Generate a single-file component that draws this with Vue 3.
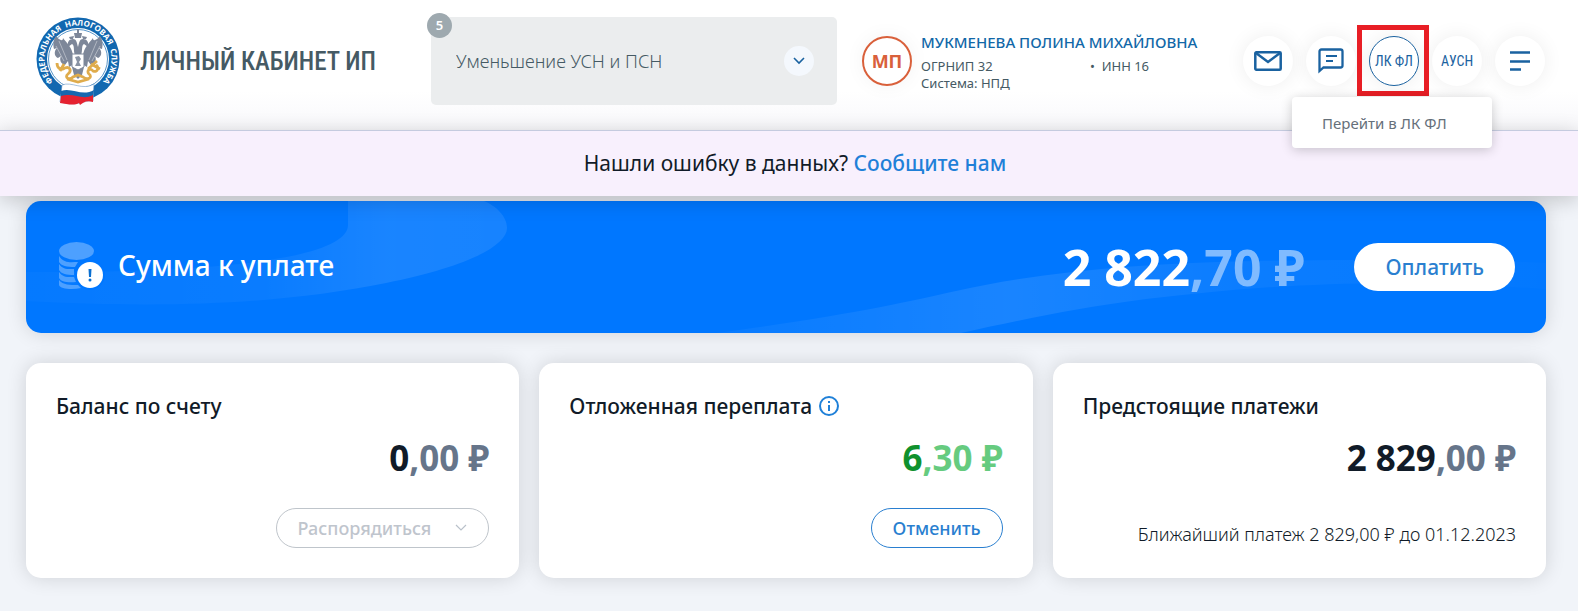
<script setup>
import { ref } from 'vue';

const selectedMode = ref('usn');

const modes = [
  { value: 'usn', label: 'Уменьшение УСН и ПСН' }
];

const cards = [
  {
    id: 'balance',
    title: 'Баланс по счету',
    whole: '0',
    fraction: ',00 ₽',
    button: 'Распорядиться',
    disabled: true
  },
  {
    id: 'deferred',
    title: 'Отложенная переплата',
    whole: '6',
    fraction: ',30 ₽',
    info: true,
    green: true,
    button: 'Отменить'
  },
  {
    id: 'upcoming',
    title: 'Предстоящие платежи',
    whole: '2 829',
    fraction: ',00 ₽',
    note: 'Ближайший платеж 2 829,00 ₽ до 01.12.2023'
  }
];
</script>

<template>
  <div class="page">
    <header class="header">
      <a href="#" class="brand">
        <svg class="logo" viewBox="0 0 84 88" aria-hidden="true">
          <defs>
            <path id="ring" d="M42 75.500 A33.500 33.500 0 0 1 42 8.500 A33.500 33.500 0 0 1 42 75.500" />
          </defs>
          <circle cx="42" cy="42" r="41.500" fill="#1268b0" />
          <circle cx="42" cy="42" r="31" fill="#fff" />
          <circle cx="42" cy="42" r="29.500" fill="none" stroke="#1268b0" stroke-width="0.700" />
          <text class="logo-text">
            <textPath href="#ring" startOffset="50%" text-anchor="middle">ФЕДЕРАЛЬНАЯ&#160; НАЛОГОВАЯ&#160; СЛУЖБА</textPath>
          </text>
          <g fill="#7d8799">
            <path d="M37 38 C36 31 31 26 27 21 C27 25 23 23 20 19 C17 23 17 28 18 32 L21 31 C17 35 19 40 22 41 L25 39 C23 43 25 47 29 48 L32 44 L33 50 L38 47Z" />
            <path d="M47 38 C48 31 53 26 57 21 C57 25 61 23 64 19 C67 23 67 28 66 32 L63 31 C67 35 65 40 62 41 L59 39 C61 43 59 47 55 48 L52 44 L51 50 L46 47Z" />
            <path d="M39 38 C37 33 39 29 36 27 L32 30 C31 25 33 22 37 22 C41 22 41 27 42 30 C43 27 43 22 47 22 C51 22 53 25 52 30 L48 27 C45 29 47 33 45 38Z" />
            <path d="M38 16 H46 L45 21 H39Z M41 12 H43 V16 H41Z M33 20 L38 19 L37 22 H34Z M46 19 L51 20 L50 22 H47Z" />
            <path d="M36 50 H48 L46 58 L42 62 L38 58Z" />
          </g>
          <g stroke="#fff" stroke-width="0.400" fill="none">
            <path d="M23 24 L31 43 M20 29 L28 44 M61 24 L53 43 M64 29 L56 44" />
          </g>
          <g fill="none" stroke="#dfac4c" stroke-width="2.800">
            <path d="M21 46 C21 51 25 54 29 51 C34 49 36 54 32 57 C28 60 33 64 37 60 L42 58 L47 60 C52 64 57 60 53 57 C50 54 54 50 57 54 C62 56 63 50 60 48 M52 52 L61 44 M31 62 L42 65 L53 62 M24 54 L28 47 M55 47 L64 52" />
          </g>
          <path d="M36 37 H48 V50 L42 53 L36 50Z" fill="#fff" stroke="#7d8799" />
          <path d="M39 40 L43 39 L45 42 L43 45 L45 49 H39 L41 45Z" fill="#8993a3" />
          <path d="M26 68 C36 64 46 74 58 67 L57 84 C47 83 43 90 24 85Z" fill="#fff" stroke="#4d83b8" stroke-width="0.500" />
          <path d="M25 74 C36 70 46 80 58 73 L57 80 C46 86 38 76 25 80Z" fill="#1767af" />
          <path d="M25 79 C38 75 46 84 57 78 V85 C50 83 47 86 44 88 L43 86 C38 89 31 87 24 86Z" fill="#e52230" />
        </svg>
        <span class="brand-name">ЛИЧНЫЙ КАБИНЕТ ИП</span>
      </a>

      <div class="mode">
        <span class="mode-count">5</span>
        <select v-model="selectedMode" aria-label="Режим налогообложения">
          <option v-for="mode in modes" :key="mode.value" :value="mode.value">{{ mode.label }}</option>
        </select>
        <span class="mode-arrow">
          <svg width="12" height="8" viewBox="0 0 12 8"><path d="M1 1 L6 6 L11 1" fill="none" stroke="#1a62a0" stroke-width="1.600" /></svg>
        </span>
      </div>

      <div class="profile">
        <span class="avatar">МП</span>
        <div class="profile-data">
          <a href="#" class="profile-name">МУКМЕНЕВА ПОЛИНА МИХАЙЛОВНА</a>
          <div class="profile-ids">
            <span>ОГРНИП 32</span>
            <span>•&nbsp; ИНН 16</span>
          </div>
          <div>Система: НПД</div>
        </div>
      </div>

      <nav class="actions">
        <button type="button" class="round" aria-label="Сообщения">
          <svg width="28" height="20" viewBox="0 0 28 20" fill="none" stroke="#1a62a0" stroke-width="2.500">
            <rect x="1.300" y="1.300" width="25.400" height="17.400" rx="1" />
            <path d="M2 2 L14 11 L26 2" />
          </svg>
        </button>
        <button type="button" class="round" aria-label="Чат">
          <svg width="26" height="26" viewBox="0 0 26 26" fill="none" stroke="#1a62a0" stroke-width="2.300">
            <path d="M1.500 23 V3.500 Q1.500 1.500 3.500 1.500 H22.500 Q24.500 1.500 24.500 3.500 V17.500 Q24.500 19.500 22.500 19.500 H5.500Z" />
            <path d="M8 8 H19 M8 13 H15" stroke-width="2" />
          </svg>
        </button>
        <div class="lk">
          <button type="button" class="round round-outlined">ЛК ФЛ</button>
          <span class="lk-frame"></span>
          <a href="#" class="lk-menu">Перейти в ЛК ФЛ</a>
        </div>
        <button type="button" class="round">АУСН</button>
        <button type="button" class="round" aria-label="Меню">
          <svg width="20" height="20" viewBox="0 0 20 20" fill="none" stroke="#1a62a0" stroke-width="2.400">
            <path d="M0 1.500 H20 M0 10.500 H20 M0 18.500 H11" />
          </svg>
        </button>
      </nav>
    </header>

    <div class="report">
      Нашли ошибку в данных? <a href="#">Сообщите нам</a>
    </div>

    <main class="content">
      <section class="total">
        <svg class="total-waves" viewBox="0 0 1520 132" preserveAspectRatio="none" aria-hidden="true">
          <defs>
            <linearGradient id="waveLeft" x1="0" x2="1">
              <stop offset="0" stop-color="#fff" stop-opacity="0.020" />
              <stop offset="0.500" stop-color="#fff" stop-opacity="0.040" />
              <stop offset="0.750" stop-color="#fff" stop-opacity="0.100" />
              <stop offset="1" stop-color="#fff" stop-opacity="0.090" />
            </linearGradient>
            <linearGradient id="waveRight" x1="0" x2="1">
              <stop offset="0" stop-color="#fff" stop-opacity="0.030" />
              <stop offset="0.350" stop-color="#fff" stop-opacity="0.100" />
              <stop offset="0.600" stop-color="#fff" stop-opacity="0.050" />
              <stop offset="1" stop-color="#fff" stop-opacity="0.010" />
            </linearGradient>
          </defs>
          <path d="M322 0 V24 C322 52 230 72 0 71 V100 C150 108 260 102 360 82 C440 66 481 45 481 27 C481 15 470 5 458 0Z" fill="url(#waveLeft)" />
          <path d="M690 132 C820 115 880 101 930 90 C1020 70 1120 62 1230 60 C1350 58 1440 58 1520 62 V88 C1350 76 1240 84 1120 98 C1050 107 1000 118 935 132Z" fill="url(#waveRight)" />
        </svg>
        <svg class="coins" width="46" height="50" viewBox="0 0 46 50" aria-hidden="true">
          <g fill="#4da0ff">
            <ellipse cx="17.500" cy="9" rx="17.500" ry="9" />
            <path d="M0 14 C5 22 13 20 19 20 L16 25 C8 25 2 24 0 20Z" />
            <path d="M0 22 C4 28 10 27 15 27 V33 C8 33 2 32 0 28Z" />
            <path d="M0 30 C4 36 10 35 15 35 L17 40 C9 41 2 40 0 36Z" />
            <path d="M0 38 C4 43 11 43 19 43 L22 46 C13 48 1 47 0 43Z" />
          </g>
          <circle cx="31" cy="33" r="15" fill="#0077ff" />
          <circle cx="31" cy="33" r="13" fill="#fff" />
          <path d="M29.500 27 H32.500 L32 35 H30Z" fill="#0a6fd0" />
          <circle cx="31" cy="38" r="1.500" fill="#0a6fd0" />
        </svg>
        <h2>Сумма к уплате</h2>
        <div class="total-amount">2 822<span>,70 ₽</span></div>
        <button type="button" class="pay">Оплатить</button>
      </section>

      <div class="cards">
        <section v-for="card in cards" :key="card.id" class="card">
          <h3>
            {{ card.title }}
            <svg v-if="card.info" width="20" height="20" viewBox="0 0 20 20" fill="none" stroke="#1f80d8" stroke-width="2">
              <circle cx="10" cy="10" r="9" />
              <path d="M10 9 V15 M10 5 V7" />
            </svg>
          </h3>
          <div class="amount" :class="{ green: card.green }">{{ card.whole }}<span>{{ card.fraction }}</span></div>
          <div class="card-footer">
            <button v-if="card.button" type="button" class="outline" :disabled="card.disabled">
              {{ card.button }}
              <svg v-if="card.disabled" width="12" height="8" viewBox="0 0 12 8"><path d="M1 1 L6 6 L11 1" fill="none" stroke="#b9c1ca" stroke-width="1.200" /></svg>
            </button>
            <p v-if="card.note">{{ card.note }}</p>
          </div>
        </section>
      </div>
    </main>
  </div>
</template>

<style>
html {
  background-color: #f1f4f9;
}
</style>

<style scoped>
.page {
  font-family: "Noto Sans", "Open Sans", sans-serif;
  color: #111b28;
}

.page *,
.page {
  box-sizing: border-box;
}

button,
select {
  font-family: inherit;
}

a {
  text-decoration: none;
}

.header {
  display: grid;
  grid-template-columns: 395fr 406fr 406fr auto;
  align-items: center;
  padding: 17px 33px 25px 36px;
  background: linear-gradient(#fff 70%, #f8f8fb);
}

.brand {
  display: flex;
  align-items: center;
  gap: 20px;
  color: #455a64;
}

.logo {
  width: 84px;
  height: 88px;
  flex-shrink: 0;
  overflow: visible;
}

.logo-text {
  font-family: "Open Sans", sans-serif;
  font-size: 8px;
  font-weight: 700;
  fill: #fff;
}

.brand-name {
  font-family: "Roboto Condensed", Roboto, sans-serif;
  font-size: 25px;
  font-weight: 500;
  white-space: nowrap;
}

.mode {
  position: relative;
}

.mode select {
  display: block;
  width: 100%;
  height: 88px;
  padding: 0 60px 0 25px;
  border: none;
  border-radius: 5px;
  background-color: #ebedee;
  color: #455a64;
  font-size: 18px;
  font-weight: 300;
  appearance: none;
}

.mode-count {
  position: absolute;
  top: -4px;
  left: -4px;
  width: 25px;
  height: 25px;
  border-radius: 50%;
  background-color: #9ea9af;
  color: #fff;
  font-size: 13px;
  font-weight: 600;
  line-height: 25px;
  text-align: center;
}

.mode-arrow {
  position: absolute;
  top: 29px;
  right: 23px;
  display: flex;
  align-items: center;
  justify-content: center;
  width: 30px;
  height: 30px;
  border-radius: 50%;
  background-color: #f4f8fd;
  pointer-events: none;
}

.profile {
  display: flex;
  align-items: center;
  gap: 9px;
  padding-left: 25px;
}

.avatar {
  flex-shrink: 0;
  width: 50px;
  height: 50px;
  border: 2px solid #d9603b;
  border-radius: 50%;
  box-shadow: 0 0 20px rgba(0, 0, 0, 0.05);
  color: #d9603b;
  font-size: 18px;
  font-weight: 700;
  line-height: 46px;
  text-align: center;
}

.profile-data {
  color: #455a64;
  font-size: 13px;
  line-height: 17px;
  white-space: nowrap;
}

.profile-name {
  display: block;
  margin-bottom: 4px;
  color: #1268a8;
  font-size: 15px;
  font-weight: 500;
  line-height: 24px;
}

.profile-ids {
  display: grid;
  grid-template-columns: 169px auto;
}

.actions {
  display: flex;
  gap: 13px;
}

.round {
  display: flex;
  align-items: center;
  justify-content: center;
  width: 50px;
  height: 50px;
  padding: 0;
  border: none;
  border-radius: 50%;
  background-color: #fff;
  box-shadow: 0 0 20px rgba(0, 0, 0, 0.07);
  color: #1a62a0;
  font-family: "Roboto Condensed", Roboto, sans-serif;
  font-size: 14px;
  font-weight: 400;
  cursor: pointer;
}

.round-outlined {
  border: 1px solid #1a62a0;
}

.lk {
  position: relative;
}

.lk-frame {
  position: absolute;
  top: -11px;
  left: -12px;
  width: 72px;
  height: 71px;
  border: 5px solid #e81e25;
  pointer-events: none;
}

.lk-menu {
  position: absolute;
  z-index: 3;
  top: 61px;
  left: -77px;
  width: 200px;
  padding: 14px 30px 13px;
  border-radius: 4px;
  background-color: #fff;
  box-shadow: 0 2px 12px rgba(0, 0, 0, 0.2);
  color: #66707a;
  font-size: 15px;
  line-height: 24px;
  white-space: nowrap;
}

.report {
  position: relative;
  z-index: 2;
  padding: 18px 20px 18px 32px;
  border-top: 1px solid #c5cbdf;
  background-color: #f8f0fd;
  box-shadow: 0 4px 20px rgba(0, 0, 0, 0.2);
  font-size: 21px;
  line-height: 29px;
  text-align: center;
}

.report a {
  color: #1f80d8;
  font-weight: 500;
}

.content {
  padding: 5px 32px 33px 26px;
}

.total {
  position: relative;
  display: flex;
  align-items: center;
  height: 132px;
  padding: 0 31px 0 33px;
  overflow: hidden;
  border-radius: 15px;
  background-color: #0077ff;
  box-shadow: 0 0 20px rgba(0, 0, 0, 0.14);
  color: #fff;
}

.total-waves {
  position: absolute;
  top: 0;
  left: 0;
  width: 100%;
  height: 100%;
}

.coins,
.total h2,
.total-amount,
.pay {
  position: relative;
}

.total h2 {
  margin: 0 auto 5px 13px;
  font-size: 28px;
  font-weight: 500;
}

.total-amount {
  font-size: 50px;
  font-weight: 700;
  white-space: nowrap;
}

.total-amount span {
  color: #80bbff;
}

.pay {
  height: 48px;
  margin-left: 50px;
  padding: 0 31px;
  border: none;
  border-radius: 24px;
  background-color: #fff;
  color: #2a7fd0;
  font-size: 21px;
  font-weight: 500;
  cursor: pointer;
}

.cards {
  display: grid;
  grid-template-columns: repeat(3, 1fr);
  gap: 20px;
  margin-top: 30px;
}

.card {
  padding: 29px 30px 30px;
  border-radius: 15px;
  background-color: #fff;
  box-shadow: 0 0 20px rgba(0, 0, 0, 0.14);
}

.card h3 {
  display: flex;
  align-items: center;
  gap: 7px;
  margin: 0 0 14px;
  font-size: 21px;
  font-weight: 500;
  line-height: 28px;
}

.amount {
  font-size: 35px;
  font-weight: 700;
  line-height: 48px;
  text-align: right;
}

.amount span {
  color: #66758a;
}

.amount.green {
  color: #0f912d;
}

.amount.green span {
  color: #66cb7f;
}

.card-footer {
  display: flex;
  align-items: flex-end;
  justify-content: flex-end;
  height: 40px;
  margin-top: 26px;
}

.outline {
  display: flex;
  align-items: center;
  gap: 24px;
  height: 40px;
  padding: 0 21px;
  border: 1px solid #2a7fd0;
  border-radius: 20px;
  background-color: #fff;
  color: #2a7fd0;
  font-size: 18px;
  font-weight: 500;
  cursor: pointer;
}

.outline:disabled {
  border-color: #bfc5cb;
  color: #bfc5cd;
  cursor: not-allowed;
}

.card-footer p {
  margin: 0;
  font-size: 18px;
  font-weight: 300;
  line-height: 28px;
}
</style>
